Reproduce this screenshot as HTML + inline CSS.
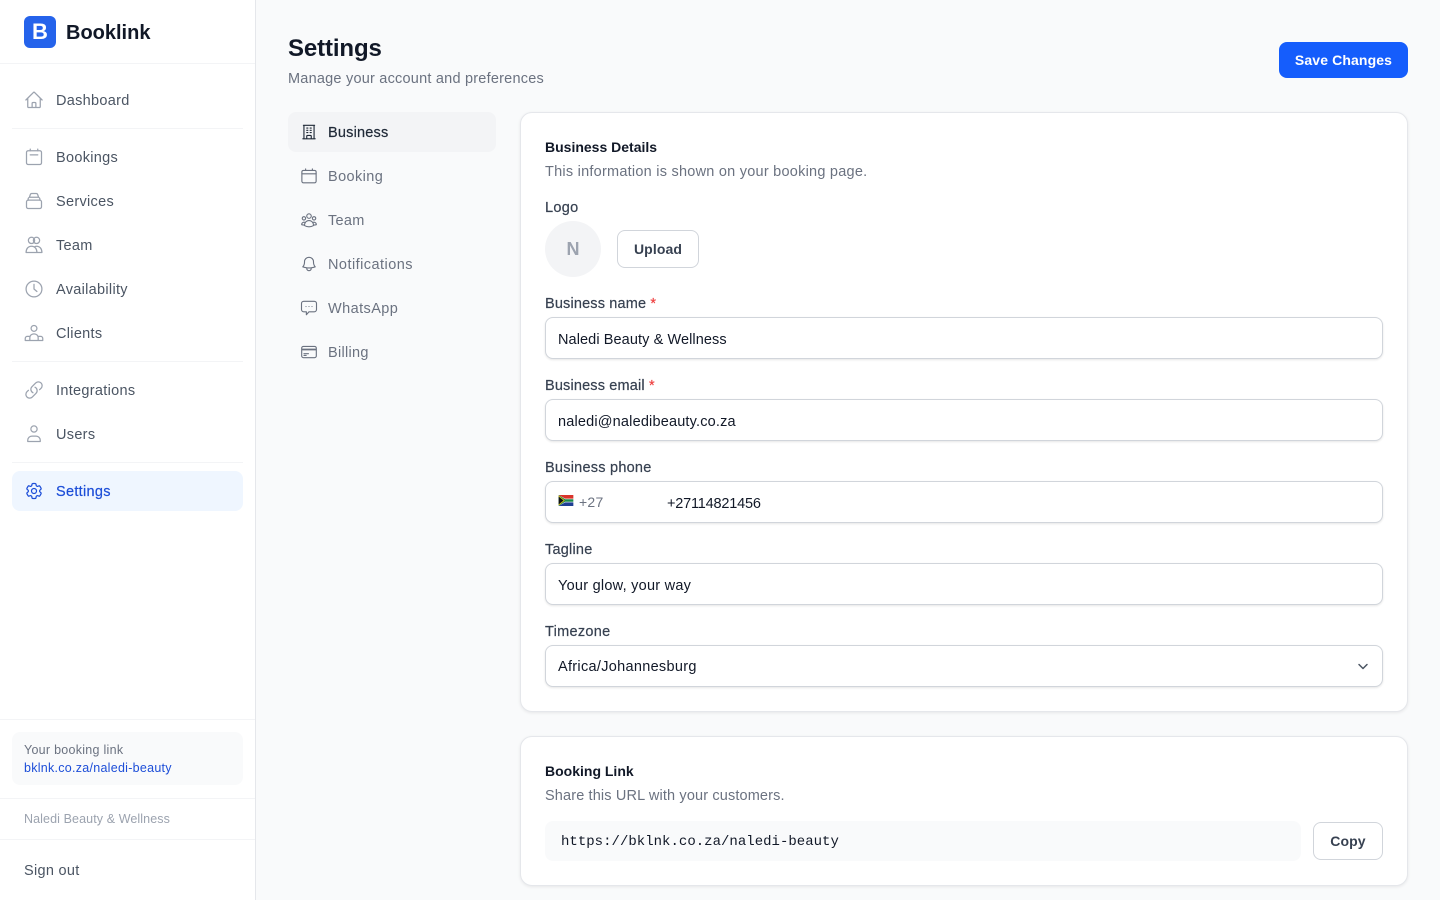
<!DOCTYPE html>
<html lang="en"><head><meta charset="utf-8"><title>Settings</title>
<style>
*{box-sizing:border-box}
html,body{margin:0;padding:0;width:1440px;height:900px;overflow:hidden;background:#f9fafb;font-family:"Liberation Sans",Arial,sans-serif}
.a{position:absolute}
.t{position:absolute;white-space:nowrap;line-height:20px;height:20px;font-size:14.5px;letter-spacing:.3px;margin-top:1px}
.m{-webkit-text-stroke:.2px currentColor}
.hr{position:absolute;height:1px;background:#f3f4f6}
.nav{color:#4b5563}
.tab{color:#6b7280}
.lab{color:#374151}
.val{color:#111827}
.input{position:absolute;left:545px;width:838px;height:42px;background:#fff;border:1px solid #d1d5db;border-radius:8px;box-shadow:0 1px 2px rgba(0,0,0,.1)}
.card{position:absolute;left:520px;width:888px;background:#fff;border:1px solid #e5e7eb;border-radius:12px;box-shadow:0 1px 3px rgba(0,0,0,.08)}
.btn{position:absolute;background:#fff;border:1px solid #d1d5db;border-radius:8px}
svg.i{position:absolute;fill:none;stroke-width:1.5;stroke-linecap:round;stroke-linejoin:round}
svg.s{width:20px;height:20px;left:24px;stroke:#9ca3af}
svg.b{width:18px;height:18px;left:300px;stroke:#6b7280}
</style></head><body>

<!-- Sidebar -->
<div class="a" style="left:0;top:0;width:256px;height:900px;background:#fff;border-right:1px solid #e5e7eb"></div>
<div class="a" style="left:24px;top:16px;width:32px;height:32px;background:#2563eb;border-radius:6px;color:#fff;font-weight:700;font-size:22px;line-height:32px;text-align:center">B</div>
<div class="t" style="left:66px;top:17px;height:30px;line-height:30px;font-size:20px;font-weight:700;letter-spacing:0;color:#111827">Booklink</div>
<div class="hr" style="left:0;top:63px;width:255px"></div>

<svg class="i s" style="top:90px" viewBox="0 0 24 24"><path d="m2.25 12 8.954-8.955c.44-.439 1.152-.439 1.591 0L21.75 12M4.5 9.75v10.125c0 .621.504 1.125 1.125 1.125H9.75v-4.875c0-.621.504-1.125 1.125-1.125h2.25c.621 0 1.125.504 1.125 1.125V21h4.125c.621 0 1.125-.504 1.125-1.125V9.75M8.25 21h8.25"/></svg>
<div class="t nav" style="left:56px;top:90px">Dashboard</div>
<div class="hr" style="left:12px;top:128px;width:231px"></div>

<svg class="i s" style="top:147px" viewBox="0 0 24 24"><rect x="3" y="4.5" width="18" height="16.5" rx="2"/><path d="M7.5 2.5v2M16.5 2.5v2M7.5 9.5h9"/></svg>
<div class="t nav" style="left:56px;top:147px">Bookings</div>
<svg class="i s" style="top:191px" viewBox="0 0 24 24"><rect x="3" y="11" width="18" height="10" rx="2"/><path d="M5 11V9.5C5 8.5 5.5 8 6.5 7.5L7.5 4.5C7.8 3.6 8.3 3 9.2 3h5.6c.9 0 1.4.6 1.7 1.5l1 3c1 .5 1.5 1 1.5 2V11M6.5 7.5h11"/></svg>
<div class="t nav" style="left:56px;top:191px">Services</div>
<svg class="i s" style="top:235px" viewBox="0 0 24 24"><circle cx="9" cy="6.5" r="3.75"/><circle cx="15" cy="6.5" r="3.75"/><path d="M2.5 21c0-4.5 2.5-7.5 6.5-7.5s6.5 3 6.5 7.5zM13 14c.6-.3 1.300-.5 2-.5 4 0 6.500 3 6.500 7.500h-6"/></svg>
<div class="t nav" style="left:56px;top:235px">Team</div>
<svg class="i s" style="top:279px" viewBox="0 0 24 24"><circle cx="12" cy="12" r="9.500"/><path d="M12 6.500V12l3.500 3"/></svg>
<div class="t nav" style="left:56px;top:279px">Availability</div>
<svg class="i s" style="top:323px" viewBox="0 0 24 24"><circle cx="12" cy="6.500" r="3.500"/><path d="M7 21v-3.500c0-2.500 2-4.500 5-4.500s5 2 5 4.500V21M1.500 21v-2.500c0-1.500 1.200-2.500 2.500-2.500h3M22.500 21v-2.500c0-1.500-1.200-2.500-2.500-2.500h-3M1.500 21h21"/></svg>
<div class="t nav" style="left:56px;top:323px">Clients</div>
<div class="hr" style="left:12px;top:361px;width:231px"></div>

<svg class="i s" style="top:380px" viewBox="0 0 24 24"><path d="M13.190 8.688a4.500 4.500 0 0 1 1.242 7.244l-4.500 4.500a4.500 4.500 0 0 1-6.364-6.364l1.757-1.757m13.350-.622 1.757-1.757a4.500 4.500 0 0 0-6.364-6.364l-4.500 4.500a4.500 4.500 0 0 0 1.242 7.244"/></svg>
<div class="t nav" style="left:56px;top:380px">Integrations</div>
<svg class="i s" style="top:424px" viewBox="0 0 24 24"><path d="M15.750 6a3.750 3.750 0 1 1-7.500 0 3.750 3.750 0 0 1 7.500 0ZM4.500 21v-1.500a5 5 0 0 1 5-5h5a5 5 0 0 1 5 5V21Z"/></svg>
<div class="t nav" style="left:56px;top:424px">Users</div>
<div class="hr" style="left:12px;top:462px;width:231px"></div>

<div class="a" style="left:12px;top:471px;width:231px;height:40px;background:#eff6ff;border-radius:8px"></div>
<svg class="i s" style="top:481px;stroke:#1d4ed8" viewBox="0 0 24 24"><path d="M9.594 3.940c.090-.542.560-.940 1.110-.940h2.593c.550 0 1.020.398 1.110.940l.213 1.281c.063.374.313.686.645.870.074.040.147.083.220.127.325.196.720.257 1.075.124l1.217-.456a1.125 1.125 0 0 1 1.370.490l1.296 2.247a1.125 1.125 0 0 1-.260 1.431l-1.003.827c-.293.241-.438.613-.430.992a7.723 7.723 0 0 1 0 .255c-.008.378.137.750.430.991l1.004.827c.424.350.534.955.260 1.430l-1.298 2.247a1.125 1.125 0 0 1-1.369.491l-1.217-.456c-.355-.133-.750-.072-1.076.124a6.470 6.470 0 0 1-.220.128c-.331.183-.581.495-.644.869l-.213 1.281c-.090.543-.560.940-1.110.940h-2.594c-.550 0-1.019-.398-1.110-.940l-.213-1.281c-.062-.374-.312-.686-.644-.870a6.520 6.520 0 0 1-.220-.127c-.325-.196-.720-.257-1.076-.124l-1.217.456a1.125 1.125 0 0 1-1.369-.490l-1.297-2.247a1.125 1.125 0 0 1 .260-1.431l1.004-.827c.292-.240.437-.613.430-.991a6.932 6.932 0 0 1 0-.255c.007-.380-.138-.751-.430-.992l-1.004-.827a1.125 1.125 0 0 1-.260-1.430l1.297-2.247a1.125 1.125 0 0 1 1.370-.491l1.216.456c.356.133.751.072 1.076-.124.072-.044.146-.086.220-.128.332-.183.582-.495.644-.869l.214-1.280Z"/><path d="M15 12a3 3 0 1 1-6 0 3 3 0 0 1 6 0Z"/></svg>
<div class="t m" style="left:56px;top:481px;color:#1d4ed8">Settings</div>

<div class="hr" style="left:0;top:719px;width:255px"></div>
<div class="a" style="left:12px;top:732px;width:231px;height:53px;background:#f9fafb;border-radius:8px"></div>
<div class="t" style="left:24px;top:739px;font-size:12.5px;letter-spacing:.27px;color:#6b7280">Your booking link</div>
<div class="t" style="left:24px;top:757px;font-size:12.5px;letter-spacing:.27px;color:#1d4ed8">bklnk.co.za/naledi-beauty</div>
<div class="hr" style="left:0;top:798px;width:255px"></div>
<div class="t" style="left:24px;top:808px;font-size:12.5px;letter-spacing:.1px;color:#9ca3af">Naledi Beauty &amp; Wellness</div>
<div class="hr" style="left:0;top:839px;width:255px"></div>
<div class="t nav" style="left:24px;top:860px">Sign out</div>

<!-- Header -->
<div class="t" style="left:288px;top:33px;height:30px;line-height:30px;font-size:24px;font-weight:700;letter-spacing:-.12px;color:#111827">Settings</div>
<div class="t" style="left:288px;top:68px;letter-spacing:.22px;color:#6b7280">Manage your account and preferences</div>
<div class="a" style="left:1279px;top:42px;width:129px;height:36px;background:#155dfc;border-radius:8px;color:#fff;font-size:14px;font-weight:700;line-height:36px;text-align:center;letter-spacing:.12px">Save Changes</div>

<!-- Tabs -->
<div class="a" style="left:288px;top:112px;width:208px;height:40px;background:#f3f4f6;border-radius:8px"></div>
<svg class="i b" style="top:123px;stroke:#1f2937" viewBox="0 0 24 24"><path d="M3.750 21h16.500M4.500 3h15M5.250 3v18m13.500-18v18M9 6.750h1.500m-1.500 3h1.500m-1.500 3h1.500m3-6H15m-1.500 3H15m-1.500 3H15M9 21v-3.375c0-.621.504-1.125 1.125-1.125h3.750c.621 0 1.125.504 1.125 1.125V21"/></svg>
<div class="t m" style="left:328px;top:122px;letter-spacing:.2px;color:#1f2937">Business</div>
<svg class="i b" style="top:167px" viewBox="0 0 24 24"><rect x="2.500" y="4.500" width="19" height="16.500" rx="2"/><path d="M7.500 2.500v2M16.500 2.500v2M2.500 9h19"/></svg>
<div class="t tab" style="left:328px;top:166px;letter-spacing:.4px">Booking</div>
<svg class="i b" style="top:211px" viewBox="0 0 24 24"><path d="M18 18.720a9.094 9.094 0 0 0 3.741-.479 3 3 0 0 0-4.682-2.720m.940 3.198.001.031c0 .225-.012.447-.037.666A11.944 11.944 0 0 1 12 21c-2.170 0-4.207-.576-5.963-1.584A6.062 6.062 0 0 1 6 18.719m12 0a5.971 5.971 0 0 0-.941-3.197m0 0A5.995 5.995 0 0 0 12 12.750a5.995 5.995 0 0 0-5.058 2.772m0 0a3 3 0 0 0-4.681 2.720 8.986 8.986 0 0 0 3.740.477m.940-3.197a5.971 5.971 0 0 0-.940 3.197M15 6.750a3 3 0 1 1-6 0 3 3 0 0 1 6 0Zm6 3a2.250 2.250 0 1 1-4.500 0 2.250 2.250 0 0 1 4.500 0Zm-13.500 0a2.250 2.250 0 1 1-4.500 0 2.250 2.250 0 0 1 4.500 0Z"/></svg>
<div class="t tab" style="left:328px;top:210px">Team</div>
<svg class="i b" style="top:255px" viewBox="0 0 24 24"><path d="M14.857 17.082a23.848 23.848 0 0 0 5.454-1.310A8.967 8.967 0 0 1 18 9.750V9A6 6 0 0 0 6 9v.750a8.967 8.967 0 0 1-2.312 6.022c1.733.640 3.560 1.085 5.455 1.310m5.714 0a24.255 24.255 0 0 1-5.714 0m5.714 0a3 3 0 1 1-5.714 0"/></svg>
<div class="t tab" style="left:328px;top:254px;letter-spacing:.46px">Notifications</div>
<svg class="i b" style="top:299px" viewBox="0 0 24 24"><path d="M5 3h14a3 3 0 0 1 3 3v8a3 3 0 0 1-3 3h-7l-3.500 4v-4H5a3 3 0 0 1-3-3V6a3 3 0 0 1 3-3Z"/><path d="M8 10h.01M12 10h.01M16 10h.01"/></svg>
<div class="t tab" style="left:328px;top:298px;letter-spacing:.42px">WhatsApp</div>
<svg class="i b" style="top:343px" viewBox="0 0 24 24"><path d="M2.250 8.250h19.500M2.250 9h19.500m-16.500 5.250h6m-6 2.250h3m-3.750 3h15a2.250 2.250 0 0 0 2.250-2.250V6.750A2.250 2.250 0 0 0 19.500 4.500h-15a2.250 2.250 0 0 0-2.250 2.250v10.500A2.250 2.250 0 0 0 4.500 19.500Z"/></svg>
<div class="t tab" style="left:328px;top:342px">Billing</div>

<!-- Card 1 -->
<div class="card" style="top:112px;height:600px"></div>
<div class="t" style="left:545px;top:136px;font-size:14px;font-weight:700;letter-spacing:0;color:#111827">Business Details</div>
<div class="t" style="left:545px;top:161px;letter-spacing:.24px;color:#6b7280">This information is shown on your booking page.</div>
<div class="t lab m" style="left:545px;top:197px">Logo</div>
<div class="a" style="left:545px;top:221px;width:56px;height:56px;border-radius:50%;background:#f3f4f6;color:#9ca3af;font-weight:700;font-size:18px;line-height:56px;text-align:center">N</div>
<div class="btn" style="left:617px;top:230px;width:82px;height:38px;color:#374151;font-size:14px;font-weight:700;line-height:36px;text-align:center;letter-spacing:.1px">Upload</div>

<div class="t lab m" style="left:545px;top:293px;letter-spacing:.16px">Business name <span style="color:#ef4444">*</span></div>
<div class="input" style="top:317px"></div>
<div class="t val" style="left:558px;top:329px;letter-spacing:.09px">Naledi Beauty &amp; Wellness</div>

<div class="t lab m" style="left:545px;top:375px;letter-spacing:.16px">Business email <span style="color:#ef4444">*</span></div>
<div class="input" style="top:399px"></div>
<div class="t val" style="left:558px;top:411px;letter-spacing:.18px">naledi@naledibeauty.co.za</div>

<div class="t lab m" style="left:545px;top:457px;letter-spacing:.24px">Business phone</div>
<div class="input" style="top:481px"></div>
<svg class="a" style="left:558px;top:495px" width="16" height="11" viewBox="0 0 16 12"><rect width="16" height="12" rx="1" fill="#fff"/><path d="M0 0h16v4H7z" fill="#d9342b"/><path d="M0 12h16V8H7z" fill="#1f3f93"/><path d="M0 0l7 4.700h9v2.600H7L0 12z" fill="#1b8a4b"/><path d="M0 1.800L5.200 6 0 10.200z" fill="#111"/><path d="M0 1l6 5-6 5" fill="none" stroke="#f2b705" stroke-width=".8"/></svg>
<div class="t" style="left:579px;top:491px;font-size:14px;letter-spacing:.25px;color:#6b7280">+27</div>
<div class="t val" style="left:667px;top:493px;letter-spacing:-.2px">+27114821456</div>

<div class="t lab m" style="left:545px;top:539px;letter-spacing:.22px">Tagline</div>
<div class="input" style="top:563px"></div>
<div class="t val" style="left:558px;top:575px;letter-spacing:.25px">Your glow, your way</div>

<div class="t lab m" style="left:545px;top:621px">Timezone</div>
<div class="input" style="top:645px"></div>
<div class="t val" style="left:558px;top:656px">Africa/Johannesburg</div>
<svg class="a" style="left:1355px;top:658px" width="16" height="16" viewBox="0 0 16 16" fill="none" stroke="#4b5563" stroke-width="1.500" stroke-linecap="round" stroke-linejoin="round"><path d="M4 6.500l4 4 4-4"/></svg>

<!-- Card 2 -->
<div class="card" style="top:736px;height:150px"></div>
<div class="t" style="left:545px;top:760px;font-size:14px;font-weight:700;letter-spacing:0;color:#111827">Booking Link</div>
<div class="t" style="left:545px;top:785px;letter-spacing:.14px;color:#6b7280">Share this URL with your customers.</div>
<div class="a" style="left:545px;top:821px;width:756px;height:40px;background:#f9fafb;border-radius:8px"></div>
<div class="t" style="left:561px;top:831px;font-family:'Liberation Mono',monospace;font-size:14px;letter-spacing:.02px;color:#111827">https://bklnk.co.za/naledi-beauty</div>
<div class="btn" style="left:1313px;top:822px;width:70px;height:38px;color:#374151;font-size:14px;font-weight:700;line-height:36px;text-align:center;letter-spacing:.1px">Copy</div>

</body></html>
